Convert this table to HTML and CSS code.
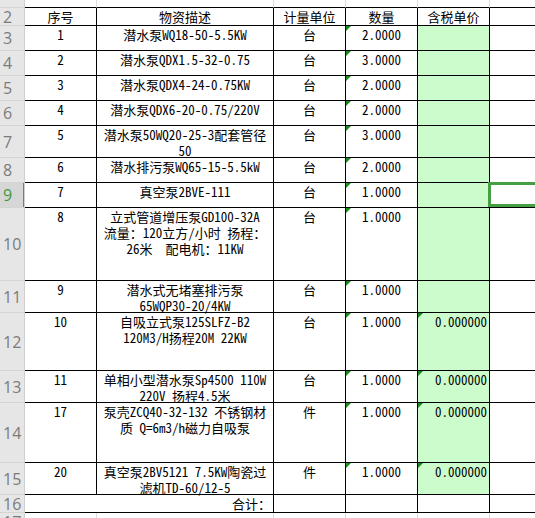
FILE: index.html
```html
<!DOCTYPE html>
<html lang="zh-CN">
<head>
<meta charset="utf-8">
<title>物资清单</title>
<link rel="stylesheet" href="styles.css">
</head>
<body>
<div class="sheet">
  <!-- row 1 (partially visible) -->
  <div class="rh"></div>
  <div class="c top"></div><div class="c top"></div><div class="c top"></div><div class="c top"></div><div class="c top"></div><div class="c top"></div>

  <!-- row 2 header -->
  <div class="rh"><span>2</span></div>
  <div class="c hd">序号</div>
  <div class="c hd">物资描述</div>
  <div class="c hd">计量单位</div>
  <div class="c hd">数量</div>
  <div class="c hd">含税单价</div>
  <div class="c"></div>

  <div class="rh"><span>3</span></div>
  <div class="c ctr">1</div>
  <div class="c ctr">潜水泵WQ18-50-5.5KW</div>
  <div class="c ctr">台</div>
  <div class="c ctr t">2.0000</div>
  <div class="c g"></div>
  <div class="c"></div>

  <div class="rh"><span>4</span></div>
  <div class="c ctr">2</div>
  <div class="c ctr">潜水泵QDX1.5-32-0.75</div>
  <div class="c ctr">台</div>
  <div class="c ctr t">3.0000</div>
  <div class="c g"></div>
  <div class="c"></div>

  <div class="rh"><span>5</span></div>
  <div class="c ctr">3</div>
  <div class="c ctr">潜水泵QDX4-24-0.75KW</div>
  <div class="c ctr">台</div>
  <div class="c ctr t">2.0000</div>
  <div class="c g"></div>
  <div class="c"></div>

  <div class="rh"><span>6</span></div>
  <div class="c ctr">4</div>
  <div class="c ctr">潜水泵QDX6-20-0.75/220V</div>
  <div class="c ctr">台</div>
  <div class="c ctr t">2.0000</div>
  <div class="c g"></div>
  <div class="c"></div>

  <div class="rh"><span>7</span></div>
  <div class="c ctr">5</div>
  <div class="c ctr">潜水泵50WQ20-25-3配套管径<br>50</div>
  <div class="c ctr">台</div>
  <div class="c ctr t">3.0000</div>
  <div class="c g"></div>
  <div class="c"></div>

  <div class="rh"><span>8</span></div>
  <div class="c ctr">6</div>
  <div class="c ctr">潜水排污泵WQ65-15-5.5kW</div>
  <div class="c ctr">台</div>
  <div class="c ctr t">2.0000</div>
  <div class="c g"></div>
  <div class="c"></div>

  <div class="rh sel"><span>9</span></div>
  <div class="c ctr">7</div>
  <div class="c ctr">真空泵2BVE-111</div>
  <div class="c ctr">台</div>
  <div class="c ctr t">1.0000</div>
  <div class="c g"></div>
  <div class="c active"></div>

  <div class="rh"><span>10</span></div>
  <div class="c ctr">8</div>
  <div class="c ctr">立式管道增压泵GD100-32A<br>流量：120立方/小时 扬程：<br>26米　配电机：11KW</div>
  <div class="c ctr">台</div>
  <div class="c ctr t">1.0000</div>
  <div class="c g"></div>
  <div class="c"></div>

  <div class="rh"><span>11</span></div>
  <div class="c ctr">9</div>
  <div class="c ctr">潜水式无堵塞排污泵<br>65WQP30-20/4KW</div>
  <div class="c ctr">台</div>
  <div class="c ctr t">1.0000</div>
  <div class="c g"></div>
  <div class="c"></div>

  <div class="rh"><span>12</span></div>
  <div class="c ctr">10</div>
  <div class="c ctr">自吸立式泵125SLFZ-B2<br>120M3/H扬程20M 22KW</div>
  <div class="c ctr">台</div>
  <div class="c ctr t">1.0000</div>
  <div class="c g rt t">0.000000</div>
  <div class="c"></div>

  <div class="rh"><span>13</span></div>
  <div class="c ctr">11</div>
  <div class="c ctr">单相小型潜水泵Sp4500 110W<br>220V 扬程4.5米</div>
  <div class="c ctr">台</div>
  <div class="c ctr t">1.0000</div>
  <div class="c g rt t">0.000000</div>
  <div class="c"></div>

  <div class="rh"><span>14</span></div>
  <div class="c ctr">17</div>
  <div class="c ctr">泵壳ZCQ40-32-132 不锈钢材<br>质 Q=6m3/h磁力自吸泵</div>
  <div class="c ctr">件</div>
  <div class="c ctr t">1.0000</div>
  <div class="c g rt t">0.000000</div>
  <div class="c"></div>

  <div class="rh"><span>15</span></div>
  <div class="c ctr">20</div>
  <div class="c ctr">真空泵2BV5121 7.5KW陶瓷过<br>滤机TD-60/12-5</div>
  <div class="c ctr">件</div>
  <div class="c ctr t">1.0000</div>
  <div class="c g rt t">0.000000</div>
  <div class="c"></div>

  <div class="rh"><span>16</span></div>
  <div class="c rt span2 sum">合计：</div>
  <div class="c"></div>
  <div class="c"></div>
  <div class="c"></div>
  <div class="c"></div>

  <div class="rh"><span>17</span></div>
  <div class="c bot"></div><div class="c bot"></div><div class="c bot"></div><div class="c bot"></div><div class="c bot"></div><div class="c bot"></div>
</div>
</body>
</html>
```

FILE: styles.css
```css
html, body {
  margin: 0;
  padding: 0;
  background: #ffffff;
  overflow: hidden;
}

.sheet {
  display: grid;
  grid-template-columns: 25px 72px 177px 72px 72px 72px 60px;
  grid-template-rows: 8px 18px 25px 25px 25px 25px 32px 25px 25px 73px 32px 58px 32px 60px 32px 18px 18px;
  width: 555px;
  font-family: "Noto Sans Mono CJK SC", "Liberation Mono", "Noto Sans CJK SC", monospace;
  font-size: 13px;
  line-height: 16px;
  color: #000;
}

.rh {
  box-sizing: border-box;
  background: #e6e6e6;
  border-right: 1px solid #cfcfcf;
  border-bottom: 1px solid #d4d4d4;
  display: flex;
  align-items: center;
  padding-left: 3px;
  font-family: "Open Sans", "Noto Sans", sans-serif;
  font-size: 16px;
  line-height: 16px;
  color: #7b7b7b;
  overflow: hidden;
  position: relative;
}

.rh.sel {
  background: #d6d6d6;
  color: #3f9a3f;
}

.rh.sel::after {
  content: "";
  position: absolute;
  right: -1px;
  top: 0;
  bottom: 0;
  width: 2px;
  background: #44a044;
}

.c {
  box-sizing: border-box;
  border-right: 1px solid #000;
  border-bottom: 1px solid #000;
  padding: 1px 2px 0;
  white-space: nowrap;
  overflow: visible;
  position: relative;
}

.c.top {
  border-right: 1px solid #dcdcdc;
  border-bottom: 1px solid #000;
}

.c.bot {
  border-right: 1px solid #dcdcdc;
  border-bottom: none;
}

.hd {
  font-family: "Noto Sans CJK SC", sans-serif;
  font-size: 13px;
  line-height: 17px;
  padding: 0;
  text-align: center;
}

.ctr {
  text-align: center;
}

.rt {
  text-align: right;
}

.g {
  background: #ccfccc;
}

.span2 {
  grid-column: span 2;
  padding-right: 2px;
}

.sum {
  padding-top: 0;
  line-height: 17px;
}

.t::before {
  content: "";
  position: absolute;
  left: 0;
  top: 0;
  border-top: 5px solid #1a8a1a;
  border-right: 5px solid transparent;
}

.active::after {
  content: "";
  position: absolute;
  left: -2px;
  top: -1px;
  right: 0;
  bottom: 0;
  border: 3px solid #45a045;
}
```
